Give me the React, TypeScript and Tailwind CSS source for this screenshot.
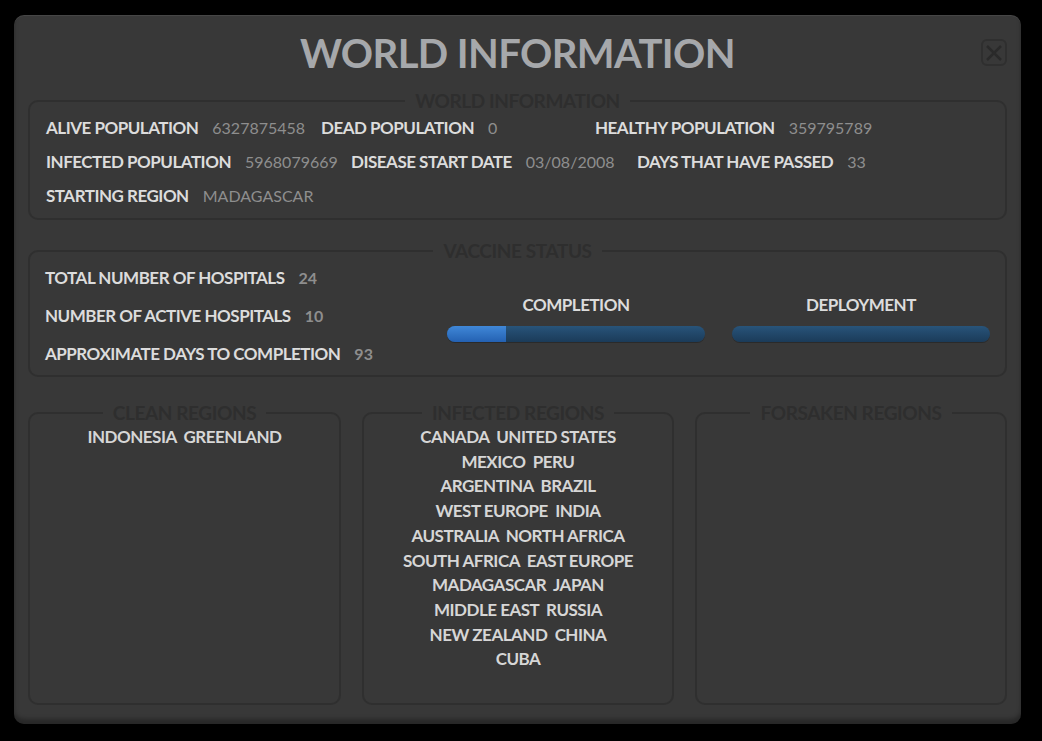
import React from 'react';

const font = { fontFamily: 'Lato, "Open Sans", sans-serif' };

interface StatProps {
    label: string;
    value: string | number;
    className?: string;
    boldValue?: boolean;
}

const Stat: React.FC<StatProps> = ({ label, value, className = '', boldValue }) => (
    <div className={`flex items-center gap-[14px] ${className}`}>
        <span className="text-[17px] font-bold text-[#dcdcdc] tracking-[-0.5px]">{label}</span>
        <span className={`text-[16px] text-[#8e8e8e] ${boldValue ? 'font-bold' : 'font-normal'}`}>{value}</span>
    </div>
);

const Box: React.FC<{ title: string; className?: string; children?: React.ReactNode }> = ({ title, className = '', children }) => (
    <fieldset className={`border-2 border-[#2f2f2f] rounded-[10px] ${className}`}>
        <legend className="mx-auto px-[10px] text-[19px] leading-[20px] font-bold text-[#2e2e2e] tracking-[-0.4px]">
            {title}
        </legend>
        {children}
    </fieldset>
);

const ProgressBar: React.FC<{ label: string; percent: number }> = ({ label, percent }) => (
    <div className="flex flex-col items-center w-[258px]">
        <span className="text-[17px] font-bold text-[#dcdcdc] tracking-[-0.5px] leading-[20px]">{label}</span>
        <div className="mt-[11px] w-full h-[16px] rounded-full overflow-hidden bg-gradient-to-b from-[#28547a] to-[#1b3b59] shadow-[0_1px_0_rgba(0,0,0,0.25)]">
            <div
                className="h-full bg-gradient-to-b from-[#4088d8] to-[#2461b2]"
                style={{ width: `${percent}%` }}
            />
        </div>
    </div>
);

const infected = [
    'CANADA  UNITED STATES',
    'MEXICO  PERU',
    'ARGENTINA  BRAZIL',
    'WEST EUROPE  INDIA',
    'AUSTRALIA  NORTH AFRICA',
    'SOUTH AFRICA  EAST EUROPE',
    'MADAGASCAR  JAPAN',
    'MIDDLE EAST  RUSSIA',
    'NEW ZEALAND  CHINA',
    'CUBA',
];

export default function App() {
    return (
        <div className="w-full h-[741px] bg-black pt-[15px] pl-[14px]" style={font}>
            <div className="relative w-[1007px] h-[709px] rounded-[10px] bg-[#383838] px-[14px] shadow-[inset_0_1px_0_rgba(255,255,255,0.07),inset_0_-5px_4px_rgba(0,0,0,0.3)]">
                {/* Title */}
                <div className="h-[76px] flex items-center justify-center">
                    <h1 className="text-[40px] font-bold text-[#a6a8ab] tracking-[-0.6px]">WORLD INFORMATION</h1>
                </div>
                <button className="absolute top-[24px] right-[14px] w-[26px] h-[27px] rounded-[6px] border-2 border-[#2f2f2f] flex items-center justify-center">
                    <svg width="18" height="18" viewBox="0 0 18 18">
                        <path d="M2 2 L16 16 M16 2 L2 16" stroke="#2a2a2a" strokeWidth="2.5" />
                    </svg>
                </button>

                {/* World information */}
                <Box title="WORLD INFORMATION" className="h-[129px]">
                    <div className="pl-[16px]">
                        <div className="flex items-center h-[34px]">
                            <Stat label="ALIVE POPULATION" value="6327875458" className="w-[275px]" />
                            <Stat label="DEAD POPULATION" value={0} className="w-[274px]" />
                            <Stat label="HEALTHY POPULATION" value="359795789" />
                        </div>
                        <div className="flex items-center h-[34px]">
                            <Stat label="INFECTED POPULATION" value="5968079669" className="w-[305px]" />
                            <Stat label="DISEASE START DATE" value="03/08/2008" className="w-[286px]" />
                            <Stat label="DAYS THAT HAVE PASSED" value={33} />
                        </div>
                        <div className="flex items-center h-[34px]">
                            <Stat label="STARTING REGION" value="MADAGASCAR" />
                        </div>
                    </div>
                </Box>

                {/* Vaccine status */}
                <Box title="VACCINE STATUS" className="mt-[21px] h-[136px]">
                    <div className="flex pl-[15px]">
                        <div className="w-[402px] flex flex-col gap-[4px]">
                            <Stat label="TOTAL NUMBER OF HOSPITALS" value={24} boldValue className="h-[34px]" />
                            <Stat label="NUMBER OF ACTIVE HOSPITALS" value={10} boldValue className="h-[34px]" />
                            <Stat label="APPROXIMATE DAYS TO COMPLETION" value={93} boldValue className="h-[34px]" />
                        </div>
                        <div className="flex gap-[27px] pt-[34px]">
                            <ProgressBar label="COMPLETION" percent={23} />
                            <ProgressBar label="DEPLOYMENT" percent={0} />
                        </div>
                    </div>
                </Box>

                {/* Regions */}
                <div className="mt-[26px] flex gap-[21px]">
                    <Box title="CLEAN REGIONS" className="w-[313px] h-[302px]">
                        <div className="pt-[2px] text-center text-[17px] leading-[24.7px] font-bold text-[#d6d6d6] tracking-[-0.5px] whitespace-pre">
                            INDONESIA  GREENLAND
                        </div>
                    </Box>
                    <Box title="INFECTED REGIONS" className="w-[312px] h-[302px]">
                        <div className="pt-[2px] flex flex-col items-center text-[17px] leading-[24.7px] font-bold text-[#d6d6d6] tracking-[-0.5px] whitespace-pre">
                            {infected.map((r) => (
                                <span key={r}>{r}</span>
                            ))}
                        </div>
                    </Box>
                    <Box title="FORSAKEN REGIONS" className="w-[312px] h-[302px]" />
                </div>
            </div>
        </div>
    );
}
